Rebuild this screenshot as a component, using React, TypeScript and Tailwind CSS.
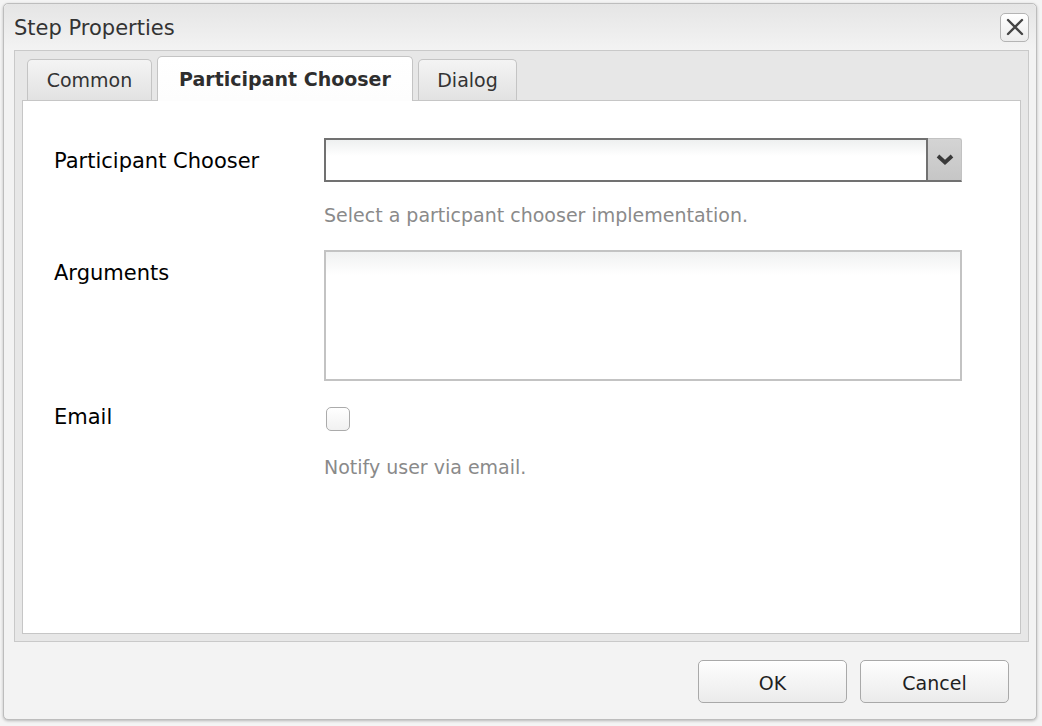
import React from "react";

const font = { fontFamily: '"DejaVu Sans", Verdana, sans-serif' };

const tabs = [
  { label: "Common", width: "w-[125px]", active: false },
  { label: "Participant Chooser", width: "w-[256px]", active: true },
  { label: "Dialog", width: "w-[99px]", active: false },
];

function Tab({ label, width, active }: { label: string; width: string; active: boolean }) {
  if (active) {
    return (
      <div
        className={`${width} relative z-10 -mb-px flex h-[45px] items-center justify-center rounded-t-[5px] border border-b-0 border-[#c4c4c4] bg-gradient-to-b from-[#ffffff] to-[#fdfdfd] pt-[1px] text-[19px] font-bold text-[#2e2e2e]`}
      >
        {label}
      </div>
    );
  }
  return (
    <div
      className={`${width} flex h-[41px] items-center justify-center rounded-t-[5px] border border-b-0 border-[#c4c4c4] bg-gradient-to-b from-[#f4f4f4] to-[#e2e2e2] pt-[1px] text-[19px] text-[#333]`}
    >
      {label}
    </div>
  );
}

function Button({ children }: { children: React.ReactNode }) {
  return (
    <button className="flex h-[43px] w-[149px] items-center justify-center rounded-[5px] border border-[#a9a9a9] bg-gradient-to-b from-[#fefefe] to-[#ebebeb] pt-[4px] text-[19px] text-[#1f1f1f] shadow-[inset_0_1px_0_#fff]">
      {children}
    </button>
  );
}

export default function App() {
  return (
    <div className="h-[726px] w-[1042px] overflow-hidden bg-[#f4f4f4] pl-[3px] pt-[3px]" style={font}>
      <div className="flex h-[717px] w-[1034px] flex-col rounded-[5px] border border-[#bdbdbd] bg-[#f3f3f3] shadow-[0_1px_3px_rgba(0,0,0,0.25)]">
        {/* header */}
        <div className="flex h-[46px] items-center justify-between rounded-t-[5px] bg-gradient-to-b from-[#e5e5e5] to-[#f3f3f3] pl-[10px] pr-[7px]">
          <span className="pt-[3px] text-[21px] text-[#333]">Step Properties</span>
          <button className="flex h-[29px] w-[29px] items-center justify-center rounded-[5px] border border-[#b4b4b4] bg-gradient-to-b from-[#ffffff] to-[#ececec]">
            <svg width="18" height="18" viewBox="0 0 18 18">
              <path d="M2 2 L16 16 M16 2 L2 16" stroke="#444" strokeWidth="2.4" strokeLinecap="round" />
            </svg>
          </button>
        </div>

        {/* tab container */}
        <div className="ml-[10px] mr-[7px] flex h-[592px] flex-col border border-[#c9c9c9] bg-[#e7e7e7] px-[7px] pb-[7px]">
          <div className="flex h-[49px] items-end gap-[5px] pl-[5px]">
            {tabs.map((t) => (
              <Tab key={t.label} {...t} />
            ))}
          </div>

          <div className="flex-1 border border-[#c6c6c6] bg-white pl-[31px] pt-[37px]">
            {/* Participant Chooser */}
            <div className="flex">
              <div className="flex h-[44px] w-[270px] items-center pt-[3px] text-[21px] text-black">Participant Chooser</div>
              <div className="flex flex-col">
                <div className="flex h-[44px] w-[638px]">
                  <div className="flex-1 border-2 border-[#717171] bg-gradient-to-b from-[#eef0f0] to-[#ffffff] to-[40%]" />
                  <div className="flex w-[34px] items-center justify-center rounded-tr-[3px] border-r border-t border-b-2 border-[#c2c2c2] border-b-[#717171] bg-gradient-to-b from-[#d4d4d4] to-[#c6c6c6]">
                    <svg width="20" height="13" viewBox="0 0 20 13">
                      <path d="M3 3 L10 9.5 L17 3" fill="none" stroke="#3a3a3a" strokeWidth="3.8" strokeLinejoin="miter" />
                    </svg>
                  </div>
                </div>
                <div className="mt-[21px] text-[19px] leading-[24px] text-[#8a8a8a]">
                  Select a particpant chooser implementation.
                </div>
              </div>
            </div>

            {/* Arguments */}
            <div className="mt-[23px] flex">
              <div className="w-[270px] pt-[11px] text-[21px] leading-[24px] text-black">Arguments</div>
              <div className="h-[131px] w-[638px] border-2 border-[#c3c3c3] bg-gradient-to-b from-[#f0f1f1] to-[#ffffff] to-[18%]" />
            </div>

            {/* Email */}
            <div className="mt-[22px] flex">
              <div className="w-[270px] pt-[2px] text-[21px] leading-[24px] text-black">Email</div>
              <div className="flex flex-col">
                <div className="ml-[2px] mt-[4px] h-[24px] w-[24px] rounded-[5px] border border-[#ababab] bg-gradient-to-b from-[#ffffff] to-[#f1f1f1]" />
                <div className="mt-[24px] text-[19px] leading-[24px] text-[#8a8a8a]">Notify user via email.</div>
              </div>
            </div>
          </div>
        </div>

        {/* footer */}
        <div className="flex flex-1 items-start justify-end gap-[13px] pr-[27px] pt-[18px]">
          <Button>OK</Button>
          <Button>Cancel</Button>
        </div>
      </div>
    </div>
  );
}
